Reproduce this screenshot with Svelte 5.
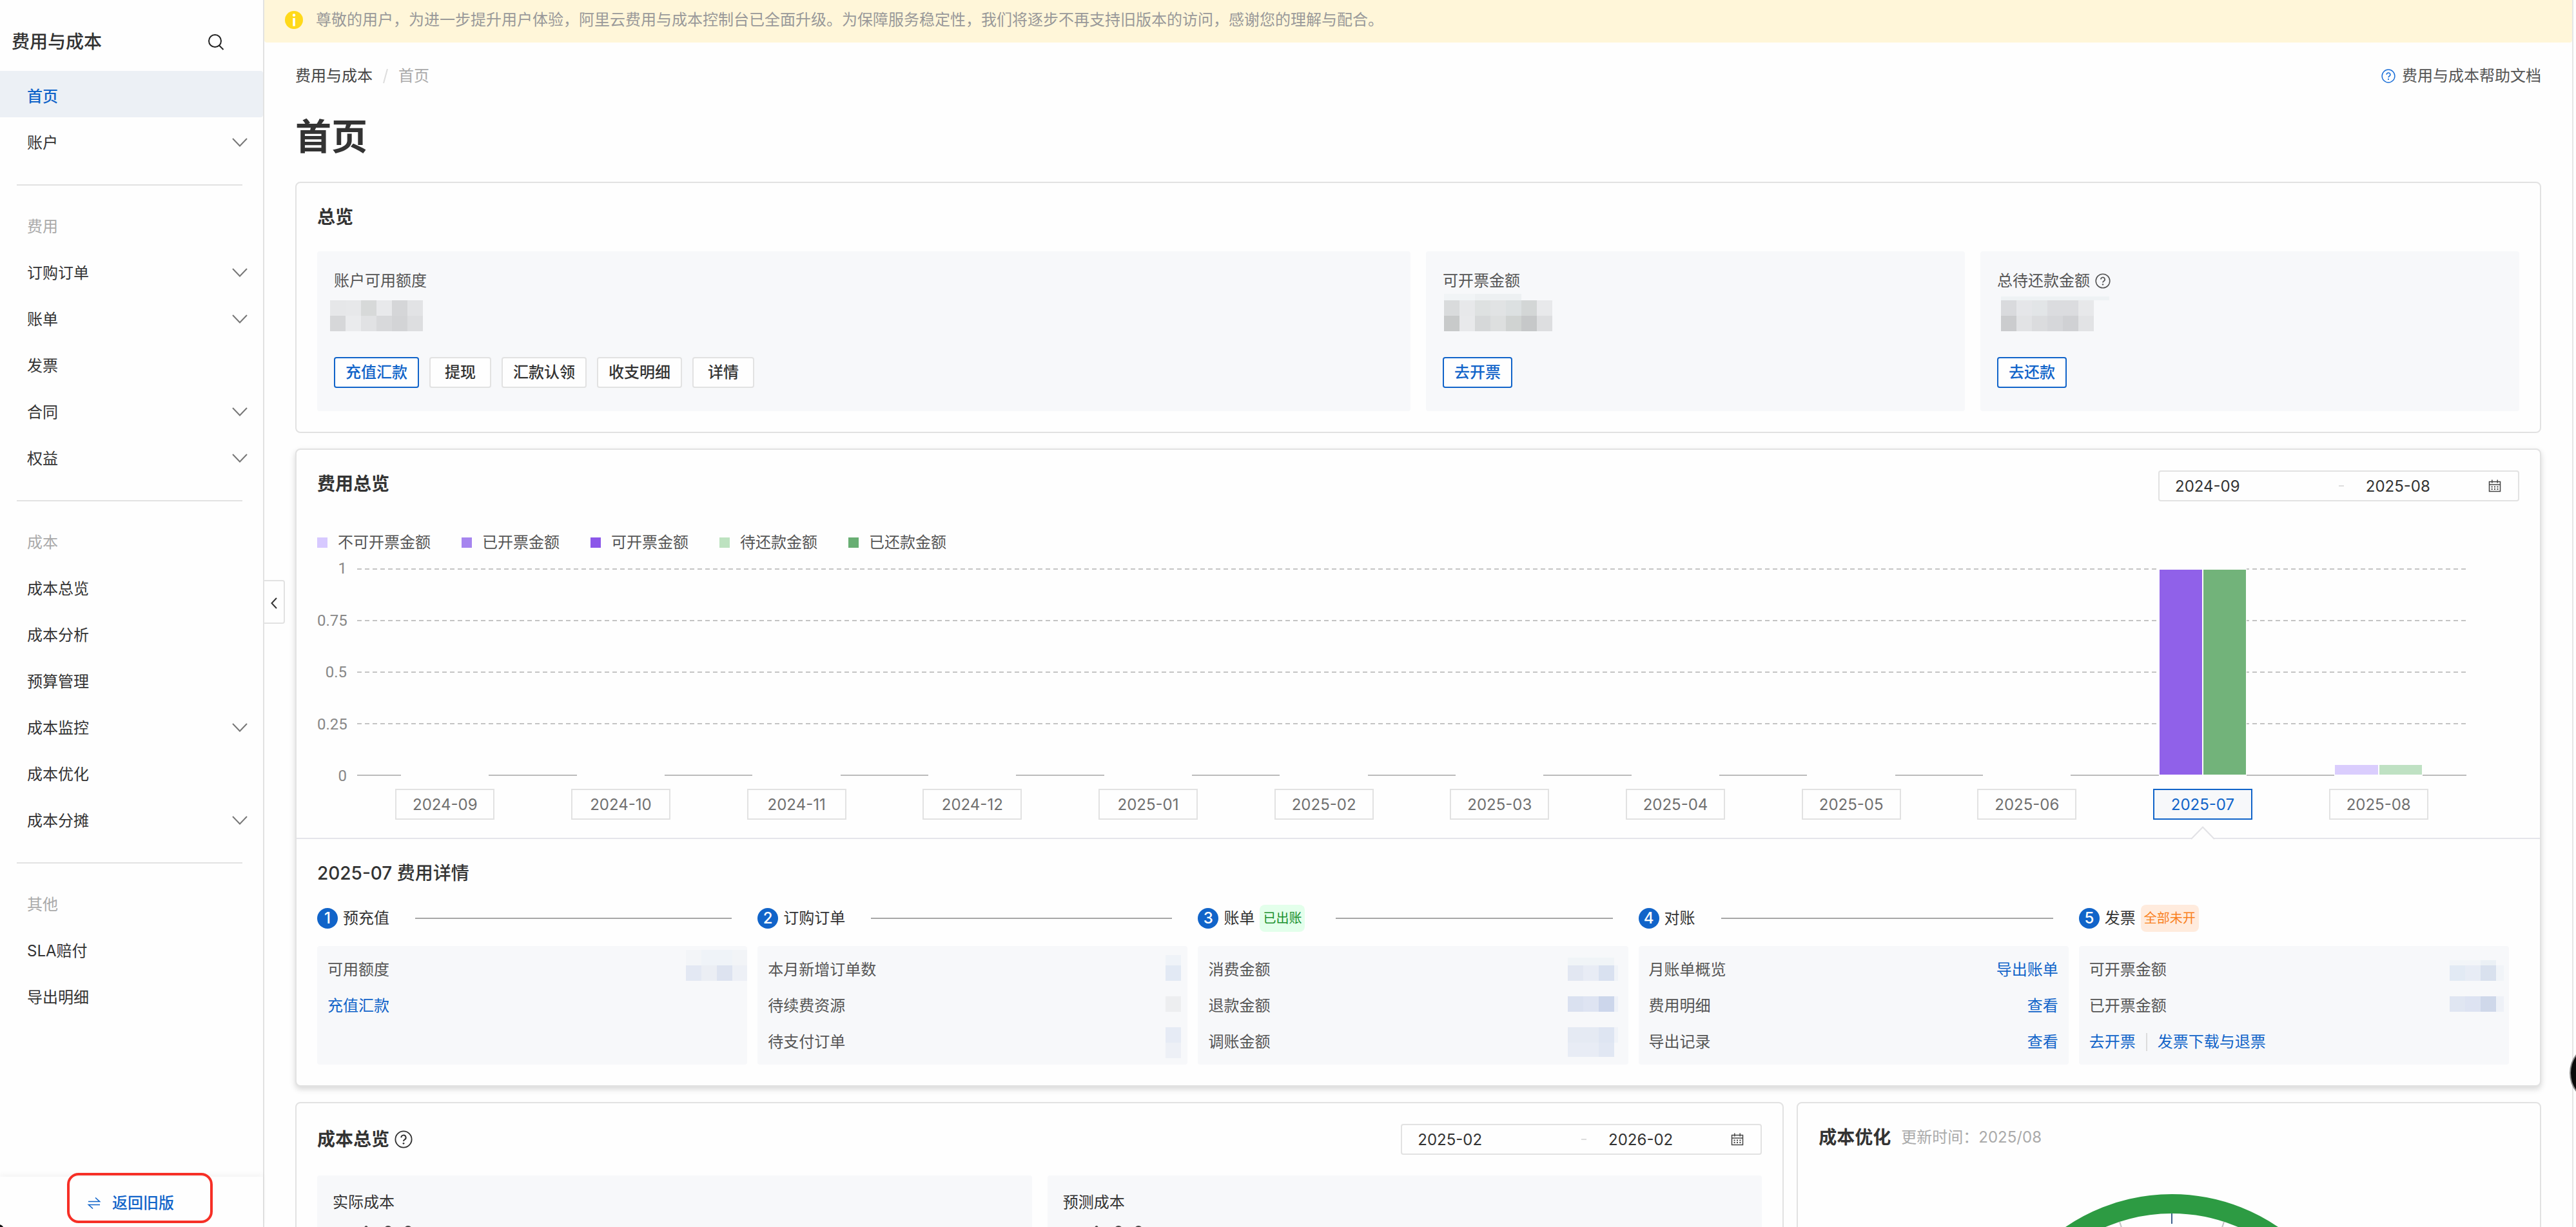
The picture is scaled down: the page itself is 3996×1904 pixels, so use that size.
<script>
	const navGroups = [
		{
			items: [
				{ text: '首页', active: true },
				{ text: '账户', children: true }
			]
		},
		{
			label: '费用',
			items: [
				{ text: '订购订单', children: true },
				{ text: '账单', children: true },
				{ text: '发票' },
				{ text: '合同', children: true },
				{ text: '权益', children: true }
			]
		},
		{
			label: '成本',
			items: [
				{ text: '成本总览' },
				{ text: '成本分析' },
				{ text: '预算管理' },
				{ text: '成本监控', children: true },
				{ text: '成本优化' },
				{ text: '成本分摊', children: true }
			]
		},
		{
			label: '其他',
			items: [{ text: 'SLA赔付' }, { text: '导出明细' }]
		}
	];

	// masked amounts: x, y, width, height, fill
	const summary = [
		{
			label: '账户可用额度',
			wide: true,
			actions: ['充值汇款', '提现', '汇款认领', '收支明细', '详情'],
			mask: [
				[-6, 0, 24, 24, '#e6e7e9'], [18, 0, 24, 24, '#e7e8ea'], [42, 0, 24, 24, '#d7d9d9'],
				[66, 0, 24, 24, '#e8e9eb'], [90, 0, 24, 24, '#d5d6d8'], [114, 0, 24, 24, '#e2e3e5'],
				[-6, 24, 24, 24, '#d6d7d9'], [18, 24, 24, 24, '#eaebed'], [42, 24, 24, 24, '#e1e2e4'],
				[66, 24, 24, 24, '#d8d9db'], [90, 24, 24, 24, '#d3d4d6'], [114, 24, 24, 24, '#dddee0']
			]
		},
		{
			label: '可开票金额',
			actions: ['去开票'],
			mask: [
				[2, -10, 48, 10, '#f1f4f6'], [50, -10, 72, 10, '#edf0f2'],
				[2, 0, 24, 24, '#d9dbdc'], [26, 0, 24, 24, '#e7e8ea'], [50, 0, 24, 24, '#dee1e1'],
				[74, 0, 24, 24, '#e1e3e4'], [98, 0, 24, 24, '#dce0e1'], [122, 0, 24, 24, '#d3d6d6'],
				[146, 0, 24, 24, '#e8e9eb'],
				[2, 24, 24, 24, '#c8caca'], [26, 24, 24, 24, '#e8e9eb'], [50, 24, 24, 24, '#d6d8d9'],
				[74, 24, 24, 24, '#dddfdf'], [98, 24, 24, 24, '#d0d3d2'], [122, 24, 24, 24, '#c6c8c9'],
				[146, 24, 24, 24, '#dddee0']
			]
		},
		{
			label: '总待还款金额',
			help: true,
			actions: ['去还款'],
			mask: [
				[6, -6, 168, 6, '#eef2f4'],
				[6, 0, 24, 24, '#d9dadd'], [30, 0, 24, 24, '#e5e6e9'], [54, 0, 24, 24, '#e2e5e7'],
				[78, 0, 48, 24, '#dbdcdf'], [126, 0, 24, 24, '#e7e8ea'],
				[6, 24, 24, 24, '#cbccce'], [30, 24, 24, 24, '#e2e3e5'], [54, 24, 24, 24, '#dbdcde'],
				[78, 24, 24, 24, '#d6d7da'], [102, 24, 24, 24, '#d0d1d4'], [126, 24, 24, 24, '#e2e3e5']
			]
		}
	];

	const legend = [
		{ name: '不可开票金额', color: '#d7c9ff' },
		{ name: '已开票金额', color: '#a685ef' },
		{ name: '可开票金额', color: '#8b57e9' },
		{ name: '待还款金额', color: '#bde2c0' },
		{ name: '已还款金额', color: '#68ae73' }
	];

	const ticks = ['1', '0.75', '0.5', '0.25', '0'];

	const months = [
		{ name: '2024-09', value: 0 },
		{ name: '2024-10', value: 0 },
		{ name: '2024-11', value: 0 },
		{ name: '2024-12', value: 0 },
		{ name: '2025-01', value: 0 },
		{ name: '2025-02', value: 0 },
		{ name: '2025-03', value: 0 },
		{ name: '2025-04', value: 0 },
		{ name: '2025-05', value: 0 },
		{ name: '2025-06', value: 0 },
		{ name: '2025-07', value: 100, colors: ['#9061e9', '#72b37a'] },
		{ name: '2025-08', value: 6, colors: ['#dacdfd', '#bfe1c3'] }
	];

	let selected = $state('2025-07');

	const steps = [
		{
			title: '预充值',
			rows: [{ name: '可用额度' }, { links: ['充值汇款'] }],
			mask: [
				[25, 6, 24, 24, '#f3f5f8'], [49, 6, 48, 24, '#eff3f8'], [97, 6, 23, 24, '#f2f4f7'],
				[25, 30, 24, 24, '#e3e8f3'], [49, 30, 24, 24, '#ebeef4'], [73, 30, 24, 24, '#dde3f0'],
				[97, 30, 23, 24, '#edf0f6']
			]
		},
		{
			title: '订购订单',
			rows: [{ name: '本月新增订单数' }, { name: '待续费资源' }, { name: '待支付订单' }],
			mask: [
				[86, 14, 24, 16, '#eff3f8'], [86, 30, 24, 24, '#e2e9f4'], [86, 78, 24, 24, '#edeef0'],
				[86, 126, 24, 24, '#e6ebf5'], [86, 150, 24, 24, '#edf0f6']
			]
		},
		{
			title: '账单',
			tag: '已出账',
			tone: 'done',
			rows: [{ name: '消费金额' }, { name: '退款金额' }, { name: '调账金额' }],
			mask: [
				[26, 18, 72, 12, '#f0f4f7'],
				[26, 30, 24, 24, '#e2e7f2'], [50, 30, 24, 24, '#e8ecf5'], [74, 30, 24, 24, '#d9e1f0'],
				[26, 78, 24, 24, '#dae1f0'], [50, 78, 24, 24, '#dee4f2'], [74, 78, 24, 24, '#ccd6eb'],
				[26, 126, 48, 24, '#e5eaf3'], [74, 126, 24, 24, '#dee5f2'],
				[26, 150, 48, 22, '#e8ecf5'], [74, 150, 24, 22, '#e1e7f3'],
				[98, 30, 6, 24, '#f0f3f8'], [98, 78, 6, 24, '#eef1f8'], [98, 126, 6, 24, '#f0f3f8']
			]
		},
		{
			title: '对账',
			rows: [
				{ name: '月账单概览', action: '导出账单' },
				{ name: '费用明细', action: '查看' },
				{ name: '导出记录', action: '查看' }
			],
			mask: []
		},
		{
			title: '发票',
			tag: '全部未开',
			tone: 'pending',
			rows: [
				{ name: '可开票金额' },
				{ name: '已开票金额' },
				{ links: ['去开票', '发票下载与退票'] }
			],
			mask: [
				[28, 22, 48, 8, '#f2f5f8'], [76, 22, 24, 8, '#ebf0f5'],
				[28, 30, 24, 24, '#e2eaf4'], [52, 30, 24, 24, '#e7ecf5'], [76, 30, 24, 24, '#d9e1ee'],
				[28, 78, 24, 24, '#e0e6f2'], [52, 78, 24, 24, '#dde3f2'], [76, 78, 24, 24, '#cfd8ea'],
				[100, 30, 12, 24, '#f1f4f8'], [100, 78, 12, 24, '#eef1f7']
			]
		}
	];
</script>

{#snippet helpIcon(size)}
	<svg class="help-icon" width={size} height={size} viewBox="0 0 24 24" fill="none" stroke="currentColor">
		<circle cx="12" cy="12" r="10.8" stroke-width="1.6" />
		<path d="M8.9 9.6a3.1 3.1 0 1 1 4.6 2.7c-1 .6-1.5 1-1.5 2.2" stroke-width="1.7" />
		<circle cx="12" cy="17.4" r="1.2" fill="currentColor" stroke="none" />
	</svg>
{/snippet}

{#snippet cells(mask)}
	{#each mask as [x, y, w, h, fill]}
		<rect {x} {y} width={w} height={h} {fill} />
	{/each}
{/snippet}

{#snippet monthRange(id, from, to)}
	<div class="range">
		<input id="{id}-from" aria-label="开始月份" value={from} />
		<span class="range-dash"></span>
		<input id="{id}-to" aria-label="结束月份" value={to} />
		<svg width="20" height="20" viewBox="0 0 20 20" fill="none" stroke="#444" stroke-width="1.5">
			<path d="M1.5 3.5h17v15h-17zM1.5 8h17M5.8 .5v5M14.2 .5v5" />
			<path d="M4.6 11.5h2M9 11.5h2M13.4 11.5h2M4.6 15h2M9 15h2M13.4 15h2" stroke-width="2" />
		</svg>
	</div>
{/snippet}

<div class="shell">
	<aside class="sidebar">
		<div class="side-head">
			<span>费用与成本</span>
			<button class="search" aria-label="搜索">
				<svg width="26" height="26" viewBox="0 0 26 26" fill="none" stroke="#222" stroke-width="2">
					<circle cx="11.5" cy="11.5" r="9.5" />
					<path d="M18 18.5l6.5 6.5" />
				</svg>
			</button>
		</div>

		<nav>
			{#each navGroups as group, i}
				{#if i > 0}<hr />{/if}
				{#if group.label}<div class="nav-label">{group.label}</div>{/if}
				{#each group.items as item}
					{#if item.children}
						<button class="nav-item">
							<span>{item.text}</span>
							<svg width="24" height="14" viewBox="0 0 24 14" fill="none" stroke="#777" stroke-width="2">
								<path d="M1 0l11 11.5L23 0" />
							</svg>
						</button>
					{:else}
						<a class="nav-item" class:active={item.active} href="#{item.text}">{item.text}</a>
					{/if}
				{/each}
			{/each}
		</nav>

		<div class="side-foot">
			<a href="#old">
				<svg width="20" height="20" viewBox="0 0 20 20" fill="none" stroke="currentColor" stroke-width="1.6">
					<path d="M1 7.5h17.5L12 1.5M19 12.5H1.5L8 18.5" />
				</svg>
				返回旧版
			</a>
			<div class="marker"></div>
		</div>
	</aside>

	<main>
		<button class="collapse" aria-label="收起菜单">
			<svg width="10" height="18" viewBox="0 0 10 18" fill="none" stroke="#333" stroke-width="2">
				<path d="M9 1L1.5 9L9 17" />
			</svg>
		</button>

		<div class="notice">
			<svg width="28" height="28" viewBox="0 0 28 28">
				<circle cx="14" cy="14" r="14" fill="#ffd91a" />
				<circle cx="14" cy="6.5" r="2.2" fill="#fff" />
				<path d="M14 11v12.5" stroke="#fff" stroke-width="3.6" />
			</svg>
			<span>尊敬的用户，为进一步提升用户体验，阿里云费用与成本控制台已全面升级。为保障服务稳定性，我们将逐步不再支持旧版本的访问，感谢您的理解与配合。</span>
		</div>

		<div class="content">
			<div class="topline">
				<div class="crumbs">
					<a href="#cost">费用与成本</a>
					<svg width="8" height="24" viewBox="0 0 8 24" stroke="#ddd" stroke-width="2">
						<path d="M7 1L1 23" />
					</svg>
					<span>首页</span>
				</div>
				<a class="doc" href="#help">
					<span class="doc-icon">{@render helpIcon(22)}</span>
					费用与成本帮助文档
				</a>
			</div>

			<h1>首页</h1>

			<section class="card">
				<div class="pad">
					<h2>总览</h2>
					<div class="summary">
						{#each summary as box}
							<div class="box" class:wide={box.wide}>
								<div class="box-label">
									{box.label}
									{#if box.help}{@render helpIcon(24)}{/if}
								</div>
								<svg class="amount" width="180" height="48">{@render cells(box.mask)}</svg>
								<div class="actions">
									{#each box.actions as action, i}
										<button class="btn" class:primary={i === 0}>{action}</button>
									{/each}
								</div>
							</div>
						{/each}
					</div>
				</div>
			</section>

			<section class="card raised">
				<div class="chart-area">
					<div class="card-head">
						<h2>费用总览</h2>
						{@render monthRange('fee', '2024-09', '2025-08')}
					</div>

					<div class="legend">
						{#each legend as item}
							<span class="legend-item">
								<i style:background={item.color}></i>{item.name}
							</span>
						{/each}
					</div>

					<div class="chart">
						<div class="axis">
							{#each ticks as tick}<span>{tick}</span>{/each}
						</div>
						<div class="plot">
							<div class="lines">
								{#each ticks as tick}<div></div>{/each}
							</div>
							<div class="bars">
								{#each months as month}
									<div class="band">
										<div class="pair" style:height="{month.value}%">
											{#each month.colors ?? [] as color}
												<div style:background={color}></div>
											{/each}
										</div>
									</div>
								{/each}
							</div>
						</div>
						<div class="months">
							{#each months as month}
								<div class="month">
									<button
										class:selected={month.name === selected}
										onclick={() => (selected = month.name)}
									>
										{month.name}
									</button>
									{#if month.name === selected}
										<svg class="notch" width="38" height="20" viewBox="0 0 38 20">
											<path d="M1 20L19 1.5L37 20" fill="#fefefe" stroke="#e2e2e6" stroke-width="2" />
										</svg>
									{/if}
								</div>
							{/each}
						</div>
					</div>
				</div>

				<div class="detail">
					<h2>{selected} 费用详情</h2>
					<div class="steps">
						{#each steps as step, i}
							<div class="step">
								<div class="step-head">
									<span class="num">{i + 1}</span>
									<span>{step.title}</span>
									{#if step.tag}<span class="tag {step.tone}">{step.tag}</span>{/if}
									{#if i < steps.length - 1}<span class="rule"></span>{/if}
								</div>
								<div class="step-box">
									{#each step.rows as row}
										<div class="row">
											{#if row.links}
												<div class="links">
													{#each row.links as link}<a href="#{link}">{link}</a>{/each}
												</div>
											{:else}
												<span>{row.name}</span>
											{/if}
											{#if row.action}<a href="#{row.action}">{row.action}</a>{/if}
										</div>
									{/each}
									<svg class="mask" width="120" height="184">{@render cells(step.mask)}</svg>
								</div>
							</div>
						{/each}
					</div>
				</div>
			</section>

			<div class="bottom">
				<section class="card">
					<div class="pad">
						<div class="card-head">
							<h2 class="with-icon">成本总览 {@render helpIcon(28)}</h2>
							{@render monthRange('cost', '2025-02', '2026-02')}
						</div>
						<div class="costs">
							{#each ['实际成本', '预测成本'] as name}
								<div class="cost">
									<div class="cost-label">{name}</div>
									<svg width="200" height="48" fill="#444">
										<ellipse cx="52" cy="14" rx="5" ry="14" />
										<ellipse cx="86" cy="14" rx="9" ry="14" />
										<ellipse cx="117" cy="14" rx="9" ry="14" />
									</svg>
								</div>
							{/each}
						</div>
					</div>
				</section>

				<section class="card">
					<div class="pad">
						<div class="opt-head">
							<h2>成本优化</h2>
							<span>更新时间：2025/08</span>
						</div>
						<svg class="gauge" width="600" height="320" viewBox="0 0 600 320" fill="none">
							<path d="M27 293a277 277 0 0 1 554 0" stroke="#2d9b43" stroke-width="30" />
							<path d="M304 31v16" stroke="#3f5f8c" stroke-width="2" />
							<path
								d="M304 31v16"
								stroke="#c4c4c4"
								stroke-width="2"
								transform="rotate(18 304 293)"
							/>
							<path
								d="M304 31v16"
								stroke="#c4c4c4"
								stroke-width="2"
								transform="rotate(-18 304 293)"
							/>
						</svg>
					</div>
				</section>
			</div>
		</div>
	</main>

	<div class="float-ball"></div>
	<div class="corner"></div>
</div>

<style>
	:global(body) {
		background: #fefefe;
	}

	.shell {
		--blue: #1164c9;
		--line: #e2e2e2;
		--panel: #f7f8fa;
		position: relative;
		display: flex;
		height: 100vh;
		overflow: hidden;
		padding-right: 4px;
		box-sizing: border-box;
		font-family: Inter, 'Noto Sans CJK SC', sans-serif;
		font-size: 24px;
		line-height: 36px;
		color: #333;
		background: #fefefe;
	}

	.shell :global(*) {
		box-sizing: border-box;
	}

	svg {
		flex: none;
		display: block;
		overflow: visible;
	}

	a {
		color: var(--blue);
		text-decoration: none;
	}

	button,
	input {
		font: inherit;
		color: inherit;
	}

	h1,
	h2 {
		margin: 0;
		font-weight: 600;
	}

	h1 {
		margin: 34px 0 28px;
		font-size: 56px;
		line-height: 84px;
	}

	h2 {
		font-size: 28px;
		line-height: 42px;
	}

	/* sidebar */
	.sidebar {
		flex: none;
		width: 410px;
		display: flex;
		flex-direction: column;
		border-right: 2px solid var(--line);
	}

	.side-head {
		display: flex;
		align-items: center;
		justify-content: space-between;
		height: 110px;
		padding: 20px 60px 0 18px;
		font-size: 28px;
		font-weight: 500;
	}

	.search {
		padding: 0;
		border: 0;
		background: none;
	}

	nav {
		flex: 1;
	}

	.nav-item,
	.nav-label {
		display: flex;
		align-items: center;
		justify-content: space-between;
		width: 100%;
		height: 72px;
		padding: 8px 24px 0 42px;
		border: 0;
		background: none;
		color: #333;
		text-align: left;
	}

	.nav-label {
		color: #aaa;
	}

	.nav-item.active {
		background: #ecf0f5;
		color: var(--blue);
		font-weight: 500;
		border-radius: 0 4px 4px 0;
	}

	hr {
		height: 2px;
		margin: 32px 32px 24px 26px;
		border: 0;
		background: var(--line);
	}

	.side-foot {
		position: relative;
		height: 78px;
		box-shadow: 0 -4px 8px rgba(0, 0, 0, 0.04);
	}

	.side-foot a {
		display: flex;
		align-items: center;
		gap: 18px;
		height: 100%;
		padding: 4px 0 0 136px;
		font-weight: 500;
	}

	.marker {
		position: absolute;
		left: 104px;
		top: -6px;
		width: 226px;
		height: 78px;
		border: 4px solid #f62f26;
		border-radius: 18px;
		pointer-events: none;
	}

	/* page */
	main {
		position: relative;
		flex: 1;
		min-width: 0;
		border-right: 2px solid #e6e6e6;
	}

	.collapse {
		position: absolute;
		left: 0;
		top: 900px;
		display: flex;
		align-items: center;
		justify-content: center;
		width: 32px;
		height: 68px;
		padding: 4px 0 0;
		border: 2px solid var(--line);
		border-left: 0;
		border-radius: 0 4px 4px 0;
		background: #fefefe;
	}

	.notice {
		display: flex;
		align-items: center;
		gap: 20px;
		height: 66px;
		padding: 0 32px 4px;
		border-radius: 0 0 4px 4px;
		background: #fff6d9;
		color: #999;
	}

	.content {
		padding: 34px 48px 0;
	}

	.topline {
		display: flex;
		justify-content: space-between;
	}

	.crumbs {
		display: flex;
		align-items: center;
		gap: 16px;
		color: #aaa;
	}

	.crumbs a {
		color: #444;
	}

	.doc {
		display: flex;
		align-items: center;
		gap: 10px;
		color: #555;
	}

	.doc-icon {
		color: #1b6fd8;
	}

	.card {
		border: 2px solid var(--line);
		border-radius: 8px;
		background: #fefefe;
		margin-bottom: 24px;
	}

	.raised {
		box-shadow: 0 4px 10px rgba(0, 0, 0, 0.16);
	}

	.pad {
		padding: 32px;
	}

	.card-head {
		display: flex;
		align-items: flex-start;
		justify-content: space-between;
	}

	.summary {
		display: grid;
		grid-template-columns: repeat(4, 1fr);
		gap: 24px;
		margin-top: 32px;
	}

	.box {
		padding: 24px 26px 36px;
		border-radius: 4px;
		background: var(--panel);
	}

	.box.wide {
		grid-column: span 2;
	}

	.box-label {
		display: flex;
		align-items: center;
		gap: 8px;
		height: 40px;
		padding-top: 4px;
		color: #555;
	}

	.amount {
		margin: 12px 0 40px;
	}

	.actions {
		display: flex;
		gap: 16px;
	}

	.btn {
		min-width: 96px;
		height: 48px;
		padding: 0 16px;
		border: 2px solid var(--line);
		border-radius: 4px;
		background: #fefefe;
		font-weight: 500;
		line-height: 36px;
	}

	.btn.primary {
		border-color: var(--blue);
		color: var(--blue);
	}

	.range {
		display: grid;
		grid-template-columns: 5fr 28px 4fr 46px;
		align-items: center;
		width: 560px;
		height: 48px;
		border: 2px solid var(--line);
		border-radius: 4px;
	}

	.range input {
		width: 100%;
		min-width: 0;
		height: 40px;
		padding: 0 0 0 24px;
		border: 0;
		outline: 0;
		background: none;
	}

	.range-dash {
		justify-self: center;
		width: 8px;
		height: 2px;
		background: #ddd;
	}

	/* chart */
	.chart-area {
		padding: 32px 32px 0;
	}

	.legend {
		display: flex;
		gap: 48px;
		margin: 46px 0 22px;
		color: #555;
	}

	.legend-item {
		display: flex;
		align-items: center;
		gap: 16px;
	}

	.legend-item i {
		width: 16px;
		height: 16px;
	}

	.chart {
		display: grid;
		grid-template-columns: 46px 1fr;
		column-gap: 16px;
		padding-right: 82px;
	}

	.axis {
		display: flex;
		flex-direction: column;
		justify-content: space-between;
		margin: -16px 0;
		font-family: Roboto, sans-serif;
		line-height: 32px;
		text-align: right;
		color: #888;
	}

	.plot {
		position: relative;
		height: 322px;
	}

	.lines {
		position: absolute;
		inset: 0;
		display: flex;
		flex-direction: column;
		justify-content: space-between;
	}

	.lines div {
		height: 2px;
		background: repeating-linear-gradient(90deg, #c4c4c4 0 7px, transparent 7px 12px);
	}

	.lines div:last-child {
		background: #bbb;
	}

	.bars,
	.months {
		display: grid;
		grid-template-columns: repeat(12, 1fr);
	}

	.bars {
		position: relative;
		height: 100%;
	}

	.band {
		display: flex;
		align-items: flex-end;
		justify-content: center;
	}

	.pair {
		display: flex;
		gap: 2px;
		width: 50%;
		padding: 2px 1px;
		background: #fefefe;
	}

	.pair div {
		flex: 1;
	}

	.months {
		grid-column: 2;
		margin-top: 20px;
	}

	.month {
		position: relative;
		display: flex;
		justify-content: center;
		padding-bottom: 28px;
	}

	.month button {
		width: 154px;
		height: 48px;
		padding: 2px 0 0;
		border: 2px solid var(--line);
		background: #fefefe;
		color: #707070;
	}

	.month button.selected {
		border-color: var(--blue);
		background: var(--panel);
		color: var(--blue);
	}

	.notch {
		position: absolute;
		bottom: -2px;
		z-index: 1;
	}

	/* monthly detail */
	.detail {
		padding: 32px;
		border-top: 2px solid #e4e4ea;
	}

	.detail h2 {
		font-weight: 500;
	}

	.steps {
		display: grid;
		grid-template-columns: repeat(5, 1fr);
		margin-top: 28px;
	}

	.step {
		padding-right: 16px;
	}

	.step-head {
		display: flex;
		align-items: center;
		gap: 8px;
		height: 42px;
		margin-bottom: 22px;
	}

	.num {
		width: 32px;
		height: 32px;
		border-radius: 50%;
		background: var(--blue);
		color: #fff;
		font-weight: 500;
		line-height: 32px;
		text-align: center;
	}

	.tag {
		height: 42px;
		margin-right: 8px;
		padding: 0 5px;
		border-radius: 8px;
		font-size: 20px;
		line-height: 42px;
	}

	.tag.done {
		background: #e3ffeb;
		color: #1a8f2e;
	}

	.tag.pending {
		background: #ffebdd;
		color: #f9811e;
	}

	.rule {
		flex: 1;
		height: 2px;
		margin: 0 24px 0 32px;
		background: #a6a6a6;
	}

	.step-box {
		position: relative;
		min-height: 184px;
		padding: 8px 16px;
		border-radius: 4px;
		background: var(--panel);
		color: #555;
	}

	.row {
		display: flex;
		align-items: center;
		justify-content: space-between;
		height: 56px;
		padding-top: 2px;
	}

	.links {
		display: flex;
		align-items: center;
		line-height: 28px;
	}

	.links a + a {
		margin-left: 16px;
		padding-left: 16px;
		border-left: 2px solid #dcdcdc;
	}

	.mask {
		position: absolute;
		top: 0;
		right: 0;
		pointer-events: none;
	}

	/* bottom cards */
	.bottom {
		display: grid;
		grid-template-columns: 2fr 1fr;
		gap: 20px;
	}

	.with-icon {
		display: flex;
		align-items: center;
		gap: 8px;
		line-height: 48px;
	}

	.costs {
		display: grid;
		grid-template-columns: 1fr 1fr;
		gap: 24px;
		margin-top: 32px;
	}

	.cost {
		padding: 24px;
		border-radius: 4px;
		background: var(--panel);
	}

	.cost-label {
		margin-bottom: 18px;
	}

	.opt-head {
		display: flex;
		align-items: center;
		gap: 16px;
	}

	.opt-head span {
		color: #aaa;
	}

	.gauge {
		margin: 66px auto 0;
	}

	.float-ball {
		position: absolute;
		right: -84px;
		top: 1618px;
		width: 94px;
		height: 94px;
		border: 2px solid #888;
		border-radius: 50%;
		background: #0a0a0a;
	}

	.corner {
		position: absolute;
		left: -6px;
		bottom: -6px;
		width: 12px;
		height: 10px;
		border-radius: 0 8px 0 0;
		background: #111;
	}
</style>
